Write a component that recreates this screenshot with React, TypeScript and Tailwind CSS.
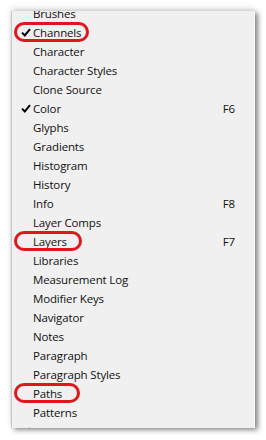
const items: { label: string; checked?: boolean; key?: string; ring?: number }[] = [
  { label: "Brushes" },
  { label: "Channels", checked: true, ring: 75 },
  { label: "Character" },
  { label: "Character Styles" },
  { label: "Clone Source" },
  { label: "Color", checked: true, key: "F6" },
  { label: "Glyphs" },
  { label: "Gradients" },
  { label: "Histogram" },
  { label: "History" },
  { label: "Info", key: "F8" },
  { label: "Layer Comps" },
  { label: "Layers", key: "F7", ring: 68 },
  { label: "Libraries" },
  { label: "Measurement Log" },
  { label: "Modifier Keys" },
  { label: "Navigator" },
  { label: "Notes" },
  { label: "Paragraph" },
  { label: "Paragraph Styles" },
  { label: "Paths", ring: 66 },
  { label: "Patterns" },
  { label: "Properties", checked: true },
];

function Check() {
  return (
    <svg width="10" height="9" viewBox="0 0 10 9" className="text-black">
      <path d="M1 4.6 L3.8 7.4 L9 1.2" fill="none" stroke="currentColor" strokeWidth="2" />
    </svg>
  );
}

export default function App() {
  return (
    <div className="w-[266px] h-[440px] bg-white overflow-hidden pt-[11px] pl-[11px]">
      <div className="w-[244px] h-[417px] bg-[#f0f0f0] border-l border-[#c8c8c8] border-r border-r-[#fbfbfb] overflow-hidden shadow-[3px_2px_5px_rgba(0,0,0,0.45),0_-3px_6px_rgba(0,0,0,0.12)] font-['Segoe_UI','Open_Sans',sans-serif] text-[11.5px] tracking-[-0.15px] text-[#111]">
        <div className="mt-[-7px]">
          {items.map((it) => (
            <div key={it.label} className="relative flex items-center h-[19px]">
              <div className="w-[20px] flex justify-end pr-[1px]">{it.checked && <Check />}</div>
              <span className="ml-[1px] leading-none">{it.label}</span>
              {it.key && <span className="ml-auto mr-[19px] leading-none">{it.key}</span>}
              {it.ring && (
                <div
                  className="absolute left-[2px] top-[-1px] h-[20px] rounded-full border-[3px] border-[#e0161d]"
                  style={{ width: it.ring }}
                />
              )}
            </div>
          ))}
        </div>
      </div>
    </div>
  );
}
